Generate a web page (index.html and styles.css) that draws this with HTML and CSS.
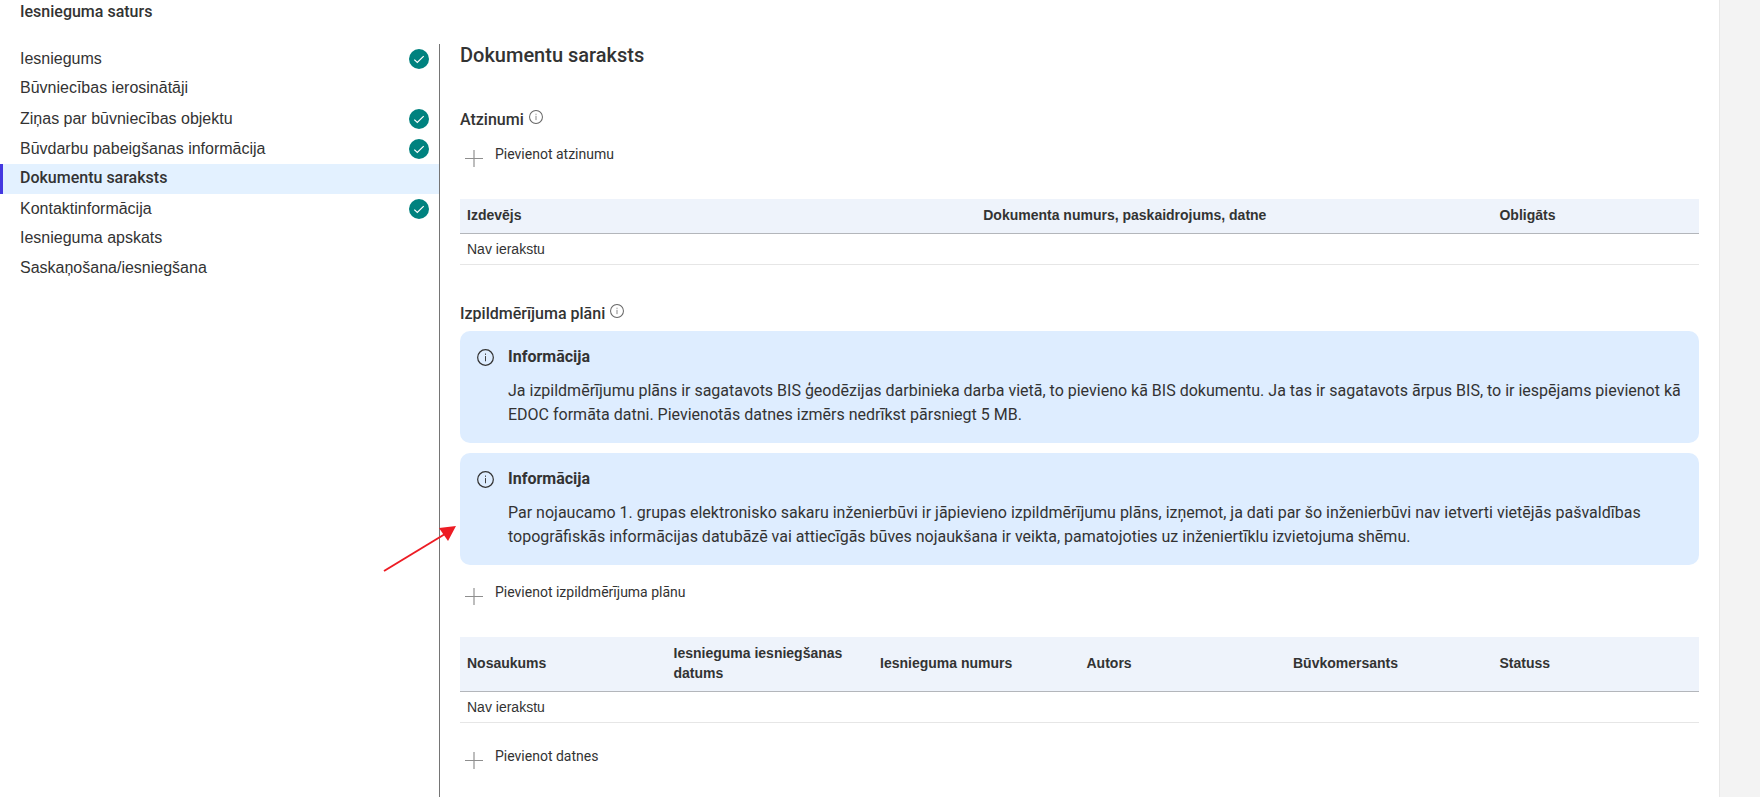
FILE: index.html
```html
<!DOCTYPE html>
<html lang="lv">
<head>
    <meta charset="UTF-8">
    <meta name="viewport" content="width=device-width, initial-scale=1.0">
    <link rel="stylesheet" href="styles.css">
    <title>Dokumentu saraksts</title>
</head>
<body>
    <!-- shared icons -->
    <svg class="sprite" aria-hidden="true">
        <symbol id="check" viewBox="0 0 20 20">
            <circle cx="10" cy="10" r="10" fill="#00827f"/>
            <path d="M5.3 10.6l3 2.9 6.4-6.4" fill="none" stroke="#fff" stroke-width="1.2"/>
        </symbol>
        <symbol id="info" viewBox="0 0 18 18">
            <circle cx="9" cy="9" r="8.3" fill="none" stroke="currentColor" stroke-width="1.3"/>
            <path d="M9 7.5v5.5M9 4.8v1.4" fill="none" stroke="currentColor" stroke-width="1"/>
        </symbol>
        <symbol id="plus" viewBox="0 0 18 18">
            <path d="M9 0v17" stroke="#bdbdbd" stroke-width="2"/>
            <path d="M0 8.5h18" stroke="#8e8e8e" stroke-width="1"/>
        </symbol>
    </svg>

    <div class="page">
        <p class="page-title">Iesnieguma saturs</p>
        <div class="columns">
            <nav class="sidebar">
                <a class="step done" href="#">Iesniegums <svg class="step-icon"><use href="#check"/></svg></a>
                <a class="step" href="#">Būvniecības ierosinātāji</a>
                <a class="step done" href="#">Ziņas par būvniecības objektu <svg class="step-icon"><use href="#check"/></svg></a>
                <a class="step done" href="#">Būvdarbu pabeigšanas informācija <svg class="step-icon"><use href="#check"/></svg></a>
                <a class="step active" href="#">Dokumentu saraksts</a>
                <a class="step done" href="#">Kontaktinformācija <svg class="step-icon"><use href="#check"/></svg></a>
                <a class="step" href="#">Iesnieguma apskats</a>
                <a class="step" href="#">Saskaņošana/iesniegšana</a>
            </nav>

            <main class="content">
                <h1>Dokumentu saraksts</h1>

                <section>
                    <h2>Atzinumi <svg class="hint"><use href="#info"/></svg></h2>
                    <button type="button" class="add"><svg class="plus"><use href="#plus"/></svg>Pievienot atzinumu</button>
                    <table>
                        <colgroup>
                            <col class="wide">
                            <col class="wide">
                            <col>
                        </colgroup>
                        <thead>
                            <tr>
                                <th>Izdevējs</th>
                                <th>Dokumenta numurs, paskaidrojums, datne</th>
                                <th>Obligāts</th>
                            </tr>
                        </thead>
                        <tbody>
                            <tr><td colspan="3">Nav ierakstu</td></tr>
                        </tbody>
                    </table>
                </section>

                <section>
                    <h2>Izpildmērījuma plāni <svg class="hint"><use href="#info"/></svg></h2>
                    <div class="alerts">
                        <div class="alert">
                            <svg class="alert-icon"><use href="#info"/></svg>
                            <div>
                                <h3>Informācija</h3>
                                <p>Ja izpildmērījumu plāns ir sagatavots BIS ģeodēzijas darbinieka darba vietā, to pievieno kā BIS dokumentu. Ja tas ir sagatavots ārpus BIS, to ir iespējams pievienot kā EDOC formāta datni. Pievienotās datnes izmērs nedrīkst pārsniegt 5 MB.</p>
                            </div>
                        </div>
                        <div class="alert">
                            <svg class="alert-icon"><use href="#info"/></svg>
                            <div>
                                <h3>Informācija</h3>
                                <p>Par nojaucamo 1. grupas elektronisko sakaru inženierbūvi ir jāpievieno izpildmērījumu plāns, izņemot, ja dati par šo inženierbūvi nav ietverti vietējās pašvaldības topogrāfiskās informācijas datubāzē vai attiecīgās būves nojaukšana ir veikta, pamatojoties uz inženiertīklu izvietojuma shēmu.</p>
                            </div>
                            <svg class="pointer" viewBox="0 0 74 48">
                                <path d="M1 46L62 9" stroke="#ed1c24" stroke-width="2"/>
                                <path d="M73 1L56 3L65 16Z" fill="#ed1c24"/>
                            </svg>
                        </div>
                    </div>
                    <button type="button" class="add"><svg class="plus"><use href="#plus"/></svg>Pievienot izpildmērījuma plānu</button>
                    <table>
                        <thead>
                            <tr>
                                <th>Nosaukums</th>
                                <th>Iesnieguma iesniegšanas datums</th>
                                <th>Iesnieguma numurs</th>
                                <th>Autors</th>
                                <th>Būvkomersants</th>
                                <th>Statuss</th>
                            </tr>
                        </thead>
                        <tbody>
                            <tr><td colspan="6">Nav ierakstu</td></tr>
                        </tbody>
                    </table>
                </section>

                <button type="button" class="add"><svg class="plus"><use href="#plus"/></svg>Pievienot datnes</button>
            </main>
        </div>
    </div>
</body>
</html>
```
FILE: styles.css
```css
:root {
    --text: #333;
    --info-bg: #deedff;
    --head-bg: #eef3fb;
    --arial: "Liberation Sans", Arial, sans-serif;
}

* {
    box-sizing: border-box;
    margin: 0;
    padding: 0;
}

body {
    background: #f3f3f3;
    color: var(--text);
    font-family: Roboto, sans-serif;
    font-size: 16px;
    line-height: 24px;
}

.sprite {
    display: none;
}

.page {
    display: flex;
    flex-direction: column;
    min-height: 100vh;
    margin-right: 40px;
    border-right: 1px solid #e8e8e8;
    background: #fff;
}

.page-title {
    padding-left: 20px;
    font-weight: 500;
}

.columns {
    display: flex;
    flex: 1;
    margin-top: 20px;
}

/* Steps */
.sidebar {
    flex: 0 0 440px;
    border-right: 1px solid #757575;
}

.step {
    display: flex;
    justify-content: space-between;
    height: 30px;
    padding: 0 10px 0 20px;
    color: var(--text);
    font-family: var(--arial);
    line-height: 28px;
    text-decoration: none;
}

.step.done {
    align-items: center;
    line-height: 30px;
}

.step.active {
    padding-left: 17px;
    border-left: 3px solid #4338e0;
    background: #e3f1ff;
    font-family: Roboto, sans-serif;
    font-weight: 500;
}

.step-icon {
    width: 20px;
    height: 20px;
}

/* Content */
.content {
    flex: 1;
    min-width: 0;
    padding: 0 20px 20px;
}

h1 {
    margin-bottom: 42px;
    font-size: 20px;
    font-weight: 500;
    line-height: 22px;
}

h2 {
    display: flex;
    gap: 5px;
    font-size: 16px;
    font-weight: 500;
}

.hint {
    width: 14px;
    height: 14px;
    margin-top: 2px;
    color: #666;
}

section {
    margin-bottom: 37px;
}

section:last-of-type {
    margin-bottom: 23px;
}

.add {
    display: flex;
    gap: 12px;
    margin-top: 12px;
    padding-left: 5px;
    border: 0;
    background: none;
    color: var(--text);
    font-family: Roboto, sans-serif;
    font-size: 14px;
    line-height: 20px;
    cursor: pointer;
}

.plus {
    width: 18px;
    height: 18px;
    margin-top: 6px;
}

/* Tables */
table {
    width: 100%;
    margin-top: 31px;
    border-collapse: separate;
    border-spacing: 0;
    table-layout: fixed;
    font-family: var(--arial);
    font-size: 14px;
    line-height: 20px;
    text-align: left;
}

.wide {
    width: 41.666%;
}

th {
    padding: 6px 7px 8px;
    border-bottom: 1px solid #b3b6bb;
    background: var(--head-bg);
    vertical-align: middle;
}

td {
    padding: 5px 7px;
    border-bottom: 1px solid #e6e6e6;
}

/* Info boxes */
.alerts {
    display: grid;
    gap: 10px;
    margin: 5px 0 17px;
}

.alert {
    position: relative;
    display: flex;
    gap: 14px;
    padding: 14px 16px 16px 17px;
    border-radius: 10px;
    background: var(--info-bg);
}

.alert-icon {
    flex: none;
    width: 17px;
    height: 17px;
    margin-top: 4px;
}

h3 {
    margin-bottom: 10px;
    font-size: 16px;
    font-weight: 700;
}

.pointer {
    position: absolute;
    top: 72px;
    left: -77px;
    width: 74px;
    height: 48px;
}
```
